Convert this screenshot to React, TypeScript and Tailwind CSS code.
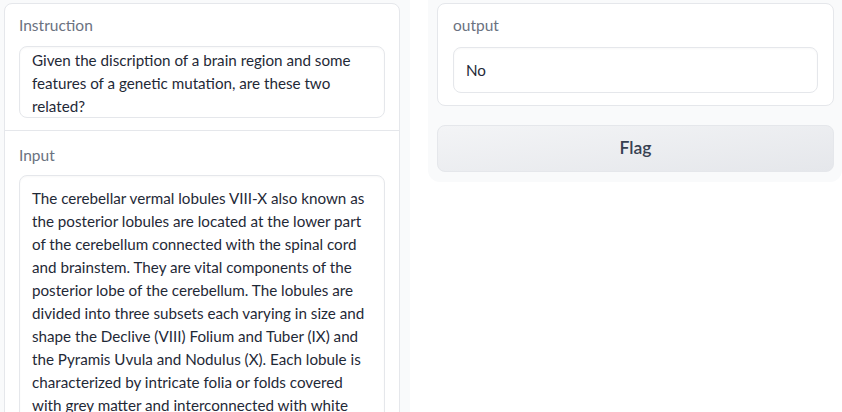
import React from "react";

const font = { fontFamily: "Lato, 'Noto Sans', sans-serif" };

const inputLines = [
  "The cerebellar vermal lobules VIII-X also known as",
  "the posterior lobules are located at the lower part",
  "of the cerebellum connected with the spinal cord",
  "and brainstem. They are vital components of the",
  "posterior lobe of the cerebellum. The lobules are",
  "divided into three subsets each varying in size and",
  "shape the Declive (VIII) Folium and Tuber (IX) and",
  "the Pyramis Uvula and Nodulus (X). Each lobule is",
  "characterized by intricate folia or folds covered",
  "with grey matter and interconnected with white",
  "matter tracts.",
];

const instructionLines = [
  "Given the discription of a brain region and some",
  "features of a genetic mutation, are these two",
  "related?",
];

function Label({ children }: { children: React.ReactNode }) {
  return <p className="text-[15.5px] leading-[20px] text-[#6b7280]">{children}</p>;
}

function TextBox({ lines, className }: { lines: string[]; className: string }) {
  return (
    <div
      className={`rounded-lg border border-[#e5e7eb] bg-white px-3 text-[15.2px] leading-[23px] text-[#1f2937] shadow-[inset_0_1px_2px_rgba(0,0,0,0.03)] ${className}`}
    >
      {lines.map((line, i) => (
        <div key={i} className="whitespace-nowrap">
          {line}
        </div>
      ))}
    </div>
  );
}

export default function App() {
  return (
    <div className="flex h-[412px] w-[842px] overflow-hidden bg-white" style={font}>
      <div className="w-[410px] shrink-0 bg-[#f9fafb] pl-[4px] pr-[10px] pt-[3px]">
        <div className="rounded-lg border border-[#e5e7eb] bg-white">
          <div className="px-[14px] pb-[12px] pt-[11px]">
            <Label>Instruction</Label>
            <TextBox lines={instructionLines} className="mt-[11px] h-[72px] overflow-hidden pt-[2px]" />
          </div>
          <div className="border-t border-[#e5e7eb] px-[14px] pt-[14px]">
            <Label>Input</Label>
            <TextBox lines={inputLines} className="mt-[10px] py-[11px]" />
          </div>
        </div>
      </div>

      <div className="ml-[18px] flex w-[414px] shrink-0 flex-col gap-[19px] self-start rounded-b-xl bg-[#f9fafb] pb-[10px] pl-[9px] pr-[8px] pt-[3px]">
        <div className="rounded-lg border border-[#e5e7eb] bg-white px-[15px] pb-[12px] pt-[11px]">
          <Label>output</Label>
          <TextBox lines={["No"]} className="mt-[12px] py-[10.5px]" />
        </div>
        <button className="h-[47px] w-full rounded-lg border border-[#e5e7eb] bg-gradient-to-br from-[#f3f4f6] to-[#e5e7eb] text-[17.5px] font-semibold text-[#374151]">
          Flag
        </button>
      </div>
    </div>
  );
}
